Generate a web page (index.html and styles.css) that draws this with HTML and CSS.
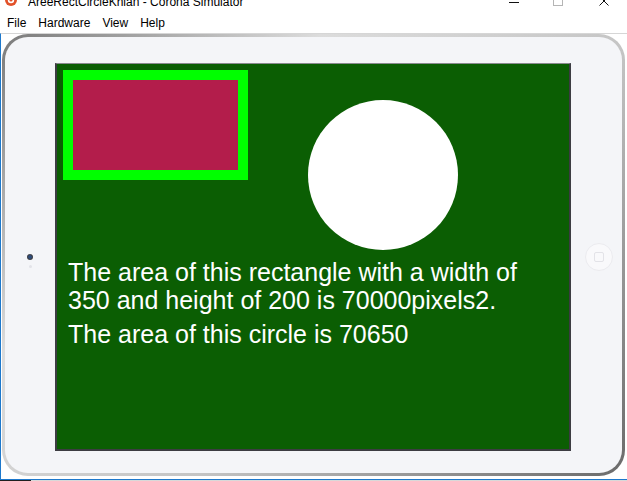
FILE: index.html
```html
<!DOCTYPE html>
<html>
<head>
<meta charset="utf-8">
<link rel="stylesheet" href="styles.css">
</head>
<body>
<div class="window">
  <div class="titlebar">
    <svg class="app-icon" width="12" height="12" viewBox="0 0 12 12"><circle cx="6" cy="6" r="6" fill="#e2522a"/><circle cx="6" cy="6" r="3.2" fill="#fff"/><circle cx="6" cy="6" r="1.6" fill="#e2522a"/></svg>
    <span class="title">AreeRectCircleKhian - Corona Simulator</span>
    <div class="win-controls">
      <div class="win-btn"><svg width="10" height="10" viewBox="0 0 10 10"><line x1="0" y1="6.5" x2="10" y2="6.5" stroke="#111" stroke-width="1"/></svg></div>
      <div class="win-btn"><svg width="10" height="10" viewBox="0 0 10 10"><rect x="0.5" y="0.5" width="9" height="9" fill="none" stroke="#b5b5b5" stroke-width="1"/></svg></div>
      <div class="win-btn"><svg width="10" height="10" viewBox="0 0 10 10"><path d="M0.5 0.5 L9.5 9.5 M9.5 0.5 L0.5 9.5" stroke="#111" stroke-width="1"/></svg></div>
    </div>
  </div>
  <div class="menubar">
    <span class="menu-item">File</span>
    <span class="menu-item">Hardware</span>
    <span class="menu-item">View</span>
    <span class="menu-item">Help</span>
  </div>
  <div class="sim-area">
    <div class="device">
      <div class="side side-left">
        <div class="camera"></div>
        <div class="sensor"></div>
      </div>
      <div class="screen">
        <div class="shapes">
          <div class="rect"></div>
          <div class="circle"></div>
        </div>
        <p class="label">The area of this rectangle with a width of<br>350 and height of 200 is 70000pixels2.</p>
        <p class="label label-circle">The area of this circle is 70650</p>
      </div>
      <div class="side side-right">
        <div class="home"><div class="home-square"></div></div>
      </div>
    </div>
  </div>
  <div class="taskbar"><div class="taskbar-dark"></div></div>
</div>
</body>
</html>
```

FILE: styles.css
```css
html, body {
  margin: 0;
  padding: 0;
  background: #ffffff;
}
body {
  width: 627px;
  height: 481px;
  overflow: hidden;
  font-family: "Liberation Sans", Arial, sans-serif;
}
.window {
  display: flex;
  flex-direction: column;
  width: 627px;
  height: 481px;
}
.titlebar {
  display: flex;
  align-items: flex-start;
  height: 14px;
  overflow: hidden;
  background: #ffffff;
  flex: none;
}
.app-icon {
  margin: -6px 0 0 5px;
  flex: none;
}
.title {
  margin: -5px 0 0 11px;
  font-size: 12px;
  line-height: 14px;
  color: #000;
  white-space: nowrap;
}
.win-controls {
  margin-left: auto;
  display: flex;
}
.win-btn {
  width: 46px;
  display: flex;
  justify-content: center;
  margin-top: -4px;
}
.win-btn:first-child {
  margin-right: -2px;
  padding-left: 4px;
}
.menubar {
  display: flex;
  height: 19px;
  padding-left: 1px;
  background: #ffffff;
  font-size: 12px;
  line-height: 19px;
  color: #000;
  flex: none;
}
.menu-item {
  padding: 0 6px;
}
.sim-area {
  flex: none;
  height: 445px;
  border-top: 1px solid #d6d6d6;
  border-left: 1px solid #1d78cc;
  border-bottom: 1px solid #1d78cc;
  background: #ffffff;
}
.device {
  box-sizing: border-box;
  margin-left: 1px;
  width: 623px;
  height: 442px;
  display: flex;
  padding: 26px 0 22px 0;
  border: 3px solid transparent;
  border-radius: 26px;
  background:
    linear-gradient(#f4f5f8, #f4f5f8) padding-box,
    linear-gradient(135deg, #7a7a7a 0%, #dcdcdc 30%, #c4c4c4 60%, #6a6a6a 100%) border-box;
}
.side {
  display: flex;
  flex-direction: column;
  align-items: center;
  justify-content: center;
  flex: none;
}
.side-left {
  width: 50px;
}
.camera {
  width: 6px;
  height: 6px;
  border-radius: 50%;
  background: radial-gradient(circle, #2d4b7a 0 35%, #3b3f49 50%);
}
.sensor {
  width: 3px;
  height: 3px;
  border-radius: 50%;
  background: #e2e3e8;
  margin-top: 5px;
  margin-bottom: -8px;
}
.side-right {
  width: 51px;
  padding-left: 5px;
  box-sizing: border-box;
}
.home {
  width: 28px;
  height: 28px;
  box-sizing: border-box;
  border-radius: 50%;
  border: 1px solid #ebebef;
  background: #f9f9fb;
  display: flex;
  align-items: center;
  justify-content: center;
}
.home-square {
  width: 8px;
  height: 8px;
  border: 1.5px solid #e3e3e8;
  border-radius: 2px;
}
.screen {
  box-sizing: border-box;
  width: 516px;
  height: 388px;
  flex: none;
  background: #0b5e03;
  border-style: solid;
  border-color: #8a8a8f #3c3c42 #3c3c42 #3c3c42;
  border-width: 1px 2px 2px 2px;
  padding: 6px;
  overflow: hidden;
}
.shapes {
  display: flex;
  align-items: flex-start;
}
.rect {
  width: 165px;
  height: 90px;
  background: #b31d4b;
  border: 10px solid #00ff00;
  flex: none;
}
.circle {
  width: 150px;
  height: 150px;
  border-radius: 50%;
  background: #ffffff;
  margin: 30px 0 0 60px;
  flex: none;
}
.label {
  margin: 8px 0 0 5px;
  color: #ffffff;
  font-size: 25px;
  line-height: 28px;
  white-space: nowrap;
}
.label-circle {
  margin-top: 6px;
}
.taskbar {
  height: 1px;
  background: #d9d9d9;
  flex: none;
}
.taskbar-dark {
  width: 31px;
  height: 1px;
  background: #1f1f1f;
}
```
